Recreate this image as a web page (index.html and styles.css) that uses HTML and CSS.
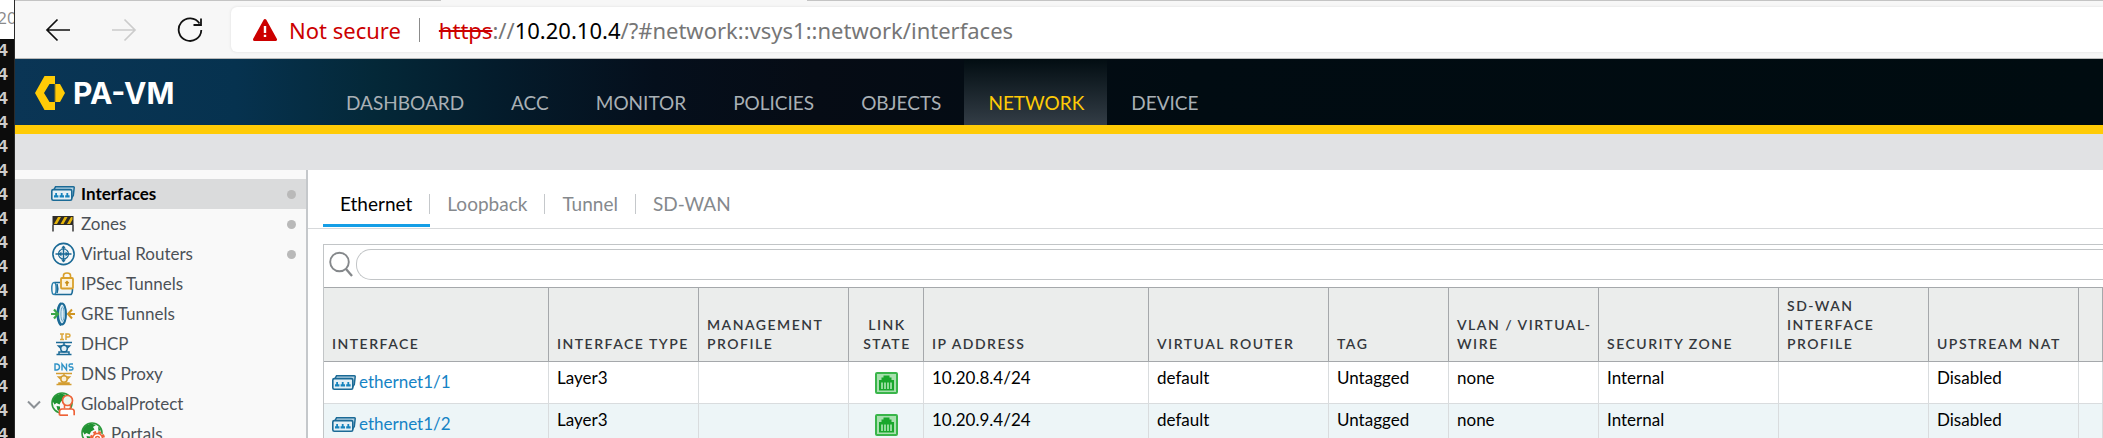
FILE: index.html
```html
<!DOCTYPE html>
<html lang="en">
<head>
<meta charset="utf-8">
<title>PA-VM</title>
<link rel="stylesheet" href="styles.css">
</head>
<body>
<svg class="sprite" aria-hidden="true">
  <symbol id="i-if" viewBox="0 0 24 15">
    <path d="M3 3.500 4.500.8H22.400Q23.300.8 23.200 1.800L22.300 9.500 20.500 12" fill="#b5d3e3" stroke="#1b6a96" stroke-width="1.500"/>
    <rect x=".8" y="3.600" width="20" height="10.600" rx="1.500" fill="#e4f0f6" stroke="#1b6a96" stroke-width="1.600"/>
    <path d="M3 11.500V9.200H4.200V7H6V9.200H7.400V11.500ZM8.600 11.500V9.200H9.800V7H11.600V9.200H13V11.500ZM14.200 11.500V9.200H15.400V7H17.200V9.200H18.600V11.500Z" fill="#1583bd"/>
  </symbol>
  <symbol id="i-port" viewBox="0 0 23 22">
    <rect x="1" y="1" width="21" height="20" rx="1" fill="#a9e0af" stroke="#39b54a" stroke-width="2"/>
    <path d="M4 18.500V8H6.500V5.500H8.500V3.500H14.500V5.500H16.500V8H19V18.500Z" fill="#19a72c"/>
    <path d="M7 10.500V17M10 10.500V17M13 10.500V17M16 10.500V17" stroke="#b9ecbe" stroke-width="1.500"/>
  </symbol>
  <symbol id="i-globe" viewBox="0 0 24 24">
    <circle cx="11" cy="11" r="10" fill="#f9f9f9" stroke="#2c9a3c" stroke-width="1.600"/>
    <path d="M5 3.500 10 1.500 15 3 12 5 13.500 7.500 10 9.500 8.500 12.500 5.500 11 3.500 12.500 1.500 9Q2.500 5.500 5 3.500ZM5.500 14 9 14.500 9 19.500 6.500 18ZM17 4.500 20 8 17.500 9Z" fill="#1f9131"/>
  </symbol>
</svg>
<div class="desktop">
  <div class="behind" aria-hidden="true">
    <div class="behind-title">20</div>
    <div class="console"><span>4</span><span>4</span><span>4</span><span>4</span><span>4</span><span>4</span><span>4</span><span>4</span><span>4</span><span>4</span><span>4</span><span>4</span><span>4</span><span>4</span><span>4</span><span>4</span><span>4</span></div>
  </div>
  <div class="browser">
    <div class="tabline"><span class="tabline-left"></span><span class="tabline-active"></span><span class="tabline-right"></span></div>
    <div class="toolbar">
      <div class="controls">
        <button type="button" aria-label="Back"><svg width="26" height="24" viewBox="0 0 26 24" fill="none" stroke="#111" stroke-width="1.700"><path d="M25 12H2M12.500 1.500 2 12 12.500 22.500"/></svg></button>
        <button type="button" aria-label="Forward" disabled><svg width="26" height="24" viewBox="0 0 26 24" fill="none" stroke="#ccc" stroke-width="1.700"><path d="M1 12H24M13.500 1.500 24 12 13.500 22.500"/></svg></button>
        <button type="button" aria-label="Refresh"><svg width="26" height="26" viewBox="0 0 26 26" fill="none" stroke="#111" stroke-width="1.800"><path d="M22.500 6.500A11.300 11.300 0 1 0 24.300 13M24 1.500V8H16.500"/></svg></button>
      </div>
      <div class="address">
        <svg width="26" height="24" viewBox="0 0 26 24"><path d="M13 2.500 23.500 21.500H2.500Z" fill="#c00" stroke="#c00" stroke-width="3" stroke-linejoin="round"/><path d="M13 8V15M13 16.800V19" stroke="#fff" stroke-width="2.400"/></svg>
        <span class="warn">Not secure</span>
        <span class="bar"></span>
        <div class="url" role="textbox" aria-label="Address"><s>https</s>://<b>10.20.10.4</b>/?#network::vsys1::network/interfaces</div>
      </div>
    </div>
    <header class="masthead">
      <div class="brand">
        <svg width="30" height="34" viewBox="0 0 30 34"><path d="M9.500 0H20V8H14.500L9 17 14.500 26H20V34H9.500L0 17Z" fill="#ffcb06"/><path d="M20 8H25L30 17 25 26H20Z" fill="#ffcb06"/><path d="M20 8V26" stroke="#8a7a20" stroke-width="1"/></svg>
        <span>PA-VM</span>
      </div>
      <nav class="mainnav">
        <a href="#dashboard">DASHBOARD</a><a href="#acc">ACC</a><a href="#monitor">MONITOR</a><a href="#policies">POLICIES</a><a href="#objects">OBJECTS</a><a href="#network" class="on">NETWORK</a><a href="#device">DEVICE</a>
      </nav>
    </header>
    <div class="subbar"></div>
    <div class="workspace">
      <nav class="side">
        <a href="#interfaces" class="item current"><svg class="ico" viewBox="0 0 24 24"><use href="#i-if" y="4" width="24" height="15"/></svg><span>Interfaces</span><i class="dot"></i></a>
        <a href="#zones" class="item"><svg class="ico" viewBox="0 0 24 24"><path d="M1.500 4H22.500V13H1.500Z" fill="#2d2b28"/><path d="M3 12 7 5H10L6 12ZM9.500 12 13.500 5H16.500L12.500 12ZM16 12 20 5H21.500V7.500L19 12Z" fill="#e5b50b"/><path d="M2 13V19.500M22 13V19.500" stroke="#444" stroke-width="1.600"/></svg><span>Zones</span><i class="dot"></i></a>
        <a href="#routers" class="item"><svg class="ico" viewBox="0 0 24 24" fill="none" stroke="#1b6a96"><circle cx="12.500" cy="12" r="10.600" stroke-width="1.600"/><circle cx="12.500" cy="12" r="5" stroke-width="1.200"/><path d="M12.500 4V20M4.500 12H20.500" stroke-width="1.500"/><path d="M10 6.500 12.500 3.500 15 6.500ZM10 17.500 12.500 20.500 15 17.500ZM10.500 9.500V14.500L7.500 12ZM14.500 9.500V14.500L17.500 12Z" fill="#1b6a96" stroke="none"/></svg><span>Virtual Routers</span><i class="dot"></i></a>
        <a href="#ipsec" class="item"><svg class="ico" viewBox="0 0 24 24" fill="none"><path d="M3.500 10.500H20Q21.500 12 21.500 16.500T20 22.500H3.500Z" fill="#eef5f9"/><path d="M3.500 10.500H9M3.500 22.500H20Q21.500 21.500 21.500 17M6 12Q7.500 16.500 6 21" stroke="#1b6a96" stroke-width="1.600"/><ellipse cx="3" cy="16.500" rx="2.200" ry="6" stroke="#2a7fac" stroke-width="1.500"/><rect x="10" y="6" width="12" height="10.500" rx="1" fill="#fdf3da" stroke="#d9a02b" stroke-width="1.800"/><path d="M12.500 6V3.500Q12.500 1 16 1T19.500 3.500V6" stroke="#d9a02b" stroke-width="1.600"/><path d="M16 8.500 18.300 10.800 16.800 12V14H15.200V12L13.700 10.800Z" fill="#c98e17"/></svg><span>IPSec Tunnels</span></a>
        <a href="#gre" class="item"><svg class="ico" viewBox="0 0 24 24" fill="none"><path d="M10 1Q6.500 4 6.500 12T10 23.500" stroke="#1b6a96" stroke-width="2"/><ellipse cx="11" cy="12" rx="4" ry="10.500" fill="#dcebf3" stroke="#1b6a96" stroke-width="2"/><ellipse cx="11.500" cy="12" rx="1.600" ry="7" stroke="#69a6c6"/><path d="M0 12H6M3 7.500 7 12 3 16.500" stroke="#3ba648" stroke-width="2.200"/><path d="M24 12H18M21 7.500 17 12 21 16.500" stroke="#cf9421" stroke-width="2"/></svg><span>GRE Tunnels</span></a>
        <a href="#dhcp" class="item"><svg class="ico" viewBox="0 0 24 24" fill="none"><path d="M9 2H13M11 2V7.500M9 7.500H13M15 8V2H17.500Q19 2 19 3.500T17.500 5H15" stroke="#dba73d" stroke-width="1.500"/><path d="M5 10.500H21M13 10.500V13M8 22.500V20H18V22.500M5.500 22.500H20.500M9.500 16 7.500 14H18.500L16.500 16M10 18.500H16" stroke="#1b6a96" stroke-width="1.500"/><circle cx="13" cy="16.500" r="3.300" fill="#e2eff6" stroke="#1b6a96" stroke-width="1.500"/></svg><span>DHCP</span></a>
        <a href="#dns" class="item"><svg class="ico" viewBox="0 0 24 24" fill="none"><path d="M4 2V8H6Q8.500 7.500 8.500 5T6 2ZM11 8.500V2L15.500 8V1.500M22 2H19.500Q18 2 18 3.500T19.500 5H20.500Q22 5 22 6.500T20.500 8H18" stroke="#3093c7" stroke-width="1.400"/><path d="M5 11.500H21M13 11.500V14M8 22.500V21H18V22.500M5.500 22.500H20.500M9.500 17 7.500 15H18.500L16.500 17" stroke="#d39d30" stroke-width="1.500"/><circle cx="13" cy="17" r="3.200" fill="#fbf0d7" stroke="#d39d30" stroke-width="1.500"/></svg><span>DNS Proxy</span></a>
        <a href="#gp" class="item parent"><svg class="chev" width="14" height="9" viewBox="0 0 14 9" fill="none" stroke="#8c9196" stroke-width="2"><path d="M1 1.500 7 7.500 13 1.500"/></svg><svg class="ico" viewBox="0 0 24 24"><use href="#i-globe" width="24" height="24"/><path d="M8.500 23.200V19.500Q8.500 17 11 17H21Q23.200 17 23.200 19.500V23.200" fill="#fff" stroke="#ee6237" stroke-width="1.700"/><path d="M8.500 23.200H17" stroke="#ee6237" stroke-width="1.700"/><circle cx="16.500" cy="8.500" r="5" fill="#eef6ee" stroke="#ee6237" stroke-width="1.700"/><path d="M13.500 13V16.500M19.500 13V16.500" stroke="#ee6237" stroke-width="1.500"/></svg><span>GlobalProtect</span></a>
        <a href="#portals" class="item child"><svg class="ico" viewBox="0 0 24 24"><use href="#i-globe" width="24" height="24"/><circle cx="16.500" cy="16.500" r="6.300" fill="#fbe3da" stroke="#ee6237" stroke-width="2.600" stroke-dasharray="2.800 2.150"/><circle cx="16.500" cy="16.500" r="5" fill="#fff" stroke="#ee6237" stroke-width="1.500"/><circle cx="16.500" cy="16.500" r="2" fill="none" stroke="#ee6237" stroke-width="1.400"/></svg><span>Portals</span></a>
      </nav>
      <main class="content">
        <div class="tabs">
          <a href="#ethernet" class="on">Ethernet</a><a href="#loopback">Loopback</a><a href="#tunnel">Tunnel</a><a href="#sdwan">SD-WAN</a>
        </div>
        <section class="grid">
          <div class="search">
            <label for="q" aria-label="Search"><svg width="24" height="26" viewBox="0 0 24 26" fill="none" stroke="#85888b" stroke-width="1.900"><circle cx="10.500" cy="11" r="9.300"/><path d="M17 18 23 25" stroke-width="2.300"/></svg></label>
            <input id="q" type="text">
          </div>
          <table>
            <colgroup><col class="w225"><col class="w150"><col class="w150"><col class="w75"><col class="w225"><col class="w180"><col class="w120"><col class="w150"><col class="w180"><col class="w150"><col class="w150"><col></colgroup>
            <thead><tr><th>Interface</th><th>Interface Type</th><th>Management Profile</th><th class="mid">Link State</th><th>IP Address</th><th>Virtual Router</th><th>Tag</th><th>VLAN / Virtual-Wire</th><th>Security Zone</th><th>SD-WAN Interface Profile</th><th>Upstream NAT</th><th></th></tr></thead>
            <tbody>
              <tr><td><a href="#e1"><svg width="24" height="15"><use href="#i-if"/></svg>ethernet1/1</a></td><td>Layer3</td><td></td><td class="mid"><svg width="23" height="22"><use href="#i-port"/></svg></td><td>10.20.8.4/24</td><td>default</td><td>Untagged</td><td>none</td><td>Internal</td><td></td><td>Disabled</td><td></td></tr>
              <tr><td><a href="#e2"><svg width="24" height="15"><use href="#i-if"/></svg>ethernet1/2</a></td><td>Layer3</td><td></td><td class="mid"><svg width="23" height="22"><use href="#i-port"/></svg></td><td>10.20.9.4/24</td><td>default</td><td>Untagged</td><td>none</td><td>Internal</td><td></td><td>Disabled</td><td></td></tr>
            </tbody>
          </table>
        </section>
      </main>
    </div>
  </div>
</div>
</body>
</html>
```
FILE: styles.css
```css
* { box-sizing: border-box; }
body { margin: 0; background: #fff; font-family: Lato, "Open Sans", sans-serif; font-size: 17px; color: #000; }
a { color: inherit; text-decoration: none; }
svg { flex: none; }
.sprite { display: none; }
.desktop { display: flex; height: 100vh; overflow: hidden; }

/* windows behind the browser */
.behind { flex: none; width: 15px; display: flex; flex-direction: column; overflow: hidden; background: #0c0c0c; border-right: 1px solid #2a2a2a; }
.behind-title { flex: none; height: 39px; display: flex; justify-content: center; align-items: center; padding-bottom: 4px; background: #fff; color: #8a8a8a; font: 17px "Open Sans", sans-serif; }
.console { display: flex; flex-direction: column; align-items: flex-end; padding-right: 6px; color: #ccc; font: bold 18px/24px "Liberation Mono", monospace; }

.browser { flex: 1; min-width: 0; display: flex; flex-direction: column; }
.tabline { flex: none; display: flex; height: 1px; }
.tabline-left { width: 426px; background: #c4c4c4; }
.tabline-active { width: 366px; background: #f7f7f7; }
.tabline-right { flex: 1; background: #c4c4c4; }
.toolbar { flex: none; height: 58px; display: flex; align-items: center; background: #f7f7f7; border-bottom: 1px solid #b9b9b9; }
.controls { width: 216px; display: flex; align-items: center; gap: 40px; padding-left: 30px; }
.controls button { display: flex; padding: 0; border: 0; background: none; }
.address { flex: 1; min-width: 0; height: 45px; display: flex; align-items: center; padding-left: 21px; background: #fff; border-radius: 6px 0 0 6px; box-shadow: 0 0 3px #ddd; font-family: "Noto Sans", sans-serif; font-size: 22px; white-space: nowrap; }
.warn { margin-left: 11px; color: #c00; }
.bar { width: 1px; height: 24px; margin: 0 19px 0 18px; background: #8b8b8b; }
.url { color: #767676; }
.url s { color: #c00; }
.url b { color: #000; font-weight: 400; }

.masthead { flex: none; height: 75px; display: flex; border-bottom: 9px solid #ffcb06; background: linear-gradient(90deg, #0a3555 0, #06324f 220px, #042838 360px, #041c2c 480px, #050f1c 640px, #060c15 800px, #010c12 1180px, #000c10 100%); }
.brand { width: 307px; display: flex; align-items: center; gap: 8px; padding: 2px 0 0 20px; color: #fff; font-family: Inter, sans-serif; font-size: 30px; font-weight: 700; }
.brand span { line-height: 34px; }
.mainnav { display: flex; }
.mainnav a { display: flex; align-items: flex-end; padding: 0 23px 11px 24px; color: #a9b0b5; font-size: 19px; line-height: 22px; }
.mainnav .on { color: #ffcb06; background: linear-gradient(#020d12, #333d46); }
.subbar { flex: none; height: 36px; background: #e1e2e4; }

.workspace { flex: 1; min-height: 0; display: flex; overflow: hidden; }
.side { flex: none; width: 293px; padding-top: 9px; background: #f9f9f9; border-right: 2px solid #c5c8cb; color: #4c5157; }
.item { display: flex; align-items: center; gap: 6px; height: 30px; padding: 0 10px 0 36px; }
.item span { flex: 1; line-height: 28px; }
.current { background: #dadbdc; color: #000; font-weight: 700; }
.ico { width: 24px; height: 24px; }
.parent { padding-left: 12px; }
.chev { margin-right: 4px; }
.child { padding-left: 66px; }
.dot { width: 9px; height: 9px; border-radius: 50%; background: #b9b9b9; }

.content { flex: 1; min-width: 0; }
.tabs { display: flex; height: 59px; padding-left: 15px; border-bottom: 1px solid #d7d9db; }
.tabs a { position: relative; display: flex; align-items: center; padding: 13px 18px 0 17px; color: #85898d; font-size: 19px; border-bottom: 3px solid transparent; margin-bottom: 1px; }
.tabs a:not(:last-child)::after { content: ""; position: absolute; right: 0; top: 24px; width: 1px; height: 20px; background: #c5c8cb; }
.tabs .on { color: #000; border-bottom-color: #159ee6; }

.grid { margin: 15px 0 0 15px; border: solid #c2c5c7; border-width: 1px 0 0 1px; }
.search { display: flex; gap: 3px; padding: 4px 0 7px 5px; }
.search label { display: flex; padding-top: 2px; }
.search input { flex: 1; min-width: 0; height: 31px; border: 1px solid #c2c5c7; border-right: 0; border-radius: 15px 0 0 15px; padding: 0 12px; font: inherit; outline: 0; }
table { width: 100%; table-layout: fixed; border-collapse: separate; border-spacing: 0; }
.w225 { width: 225px; }
.w180 { width: 180px; }
.w150 { width: 150px; }
.w120 { width: 120px; }
.w75 { width: 75px; }
th { height: 75px; padding: 8px 2px 8px 8px; border: solid #a5a8ab; border-width: 1px 1px 1px 0; background: #ebedec; color: #34383c; font-size: 14px; line-height: 19px; font-weight: 600; letter-spacing: 1.500px; text-align: left; vertical-align: bottom; text-transform: uppercase; }
td { height: 42px; padding: 5px 8px 0; border: solid #d9dcde; border-width: 0 1px 1px 0; line-height: 22px; vertical-align: top; }
tbody tr:nth-child(even) td { background: #edf5f7; }
td a { display: flex; align-items: center; gap: 3px; padding-top: 4px; color: #1583c5; }
th.mid { padding-left: 4px; text-align: center; }
td.mid { padding-top: 10px; line-height: 0; text-align: center; }
```
